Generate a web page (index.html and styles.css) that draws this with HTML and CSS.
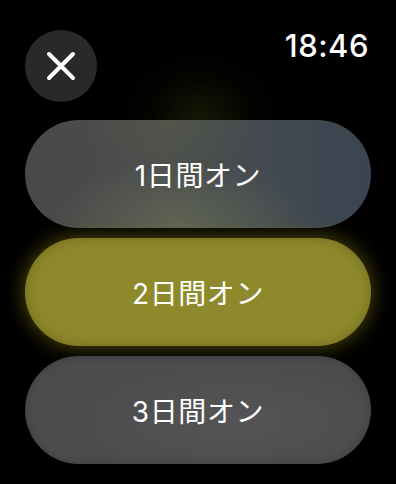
FILE: index.html
```html
<!DOCTYPE html>
<html lang="ja">
<head>
<meta charset="utf-8">
<link rel="stylesheet" href="styles.css">
</head>
<body>
<div class="screen">
  <header class="top">
    <button class="close" aria-label="閉じる">
      <svg width="30" height="30" viewBox="0 0 30 30"><path d="M3 3 L27 27 M27 3 L3 27" stroke="#fff" stroke-width="4" stroke-linecap="round" fill="none"/></svg>
    </button>
    <div class="time">18:46</div>
  </header>
  <div class="options">
    <div class="opt opt-1">1日間オン</div>
    <div class="opt opt-2">2日間オン</div>
    <div class="opt opt-3">3日間オン</div>
  </div>
</div>
</body>
</html>
```
FILE: styles.css
```css
html, body {
  margin: 0;
  padding: 0;
  background: #000;
}
.screen {
  width: 396px;
  height: 484px;
  overflow: hidden;
  background:
    radial-gradient(ellipse 80px 70px at 200px 118px, rgba(55, 55, 12, 0.4), rgba(25, 35, 8, 0.15) 60%, transparent 100%),
    #000;
}
.top {
  display: flex;
  justify-content: space-between;
  align-items: flex-start;
  padding: 30px 27px 0 25px;
}
.close {
  width: 72px;
  height: 72px;
  border-radius: 50%;
  border: none;
  padding: 0;
  background: #29292b;
  display: flex;
  align-items: center;
  justify-content: center;
}
.time {
  font-family: Inter, "Liberation Sans", sans-serif;
  font-weight: 500;
  font-size: 31px;
  line-height: 32px;
  color: #fff;
  letter-spacing: 0.5px;
}
.options {
  display: flex;
  flex-direction: column;
  gap: 10px;
  padding: 18px 25px 0 25px;
}
.opt {
  height: 108px;
  border-radius: 54px;
  display: flex;
  align-items: center;
  justify-content: center;
  font-family: Inter, "Noto Sans CJK JP", sans-serif;
  font-weight: 400;
  font-size: 28px;
  color: #fff;
  letter-spacing: 0.6px;
}
.opt-1 {
  background:
    radial-gradient(ellipse 130px 70px at 45% 100%, rgba(110, 115, 90, 0.6), transparent 100%),
    radial-gradient(ellipse 90px 60px at 42% 0%, rgba(95, 98, 70, 0.35), transparent 100%),
    linear-gradient(90deg, #48494a 0%, #4b4e4d 40%, #434a50 70%, #3a4552 100%);
}
.opt-2 {
  background: #8e8a2c;
  box-shadow: 0 0 18px 3px rgba(130, 120, 15, 0.5), inset 0 0 14px rgba(60, 55, 0, 0.35);
}
.opt-3 {
  background:
    radial-gradient(ellipse 160px 60px at 60% 60%, rgba(90, 90, 94, 0.6), transparent 100%),
    #4c4c4e;
  box-shadow: inset 0 0 10px rgba(0, 0, 0, 0.2);
}
```
